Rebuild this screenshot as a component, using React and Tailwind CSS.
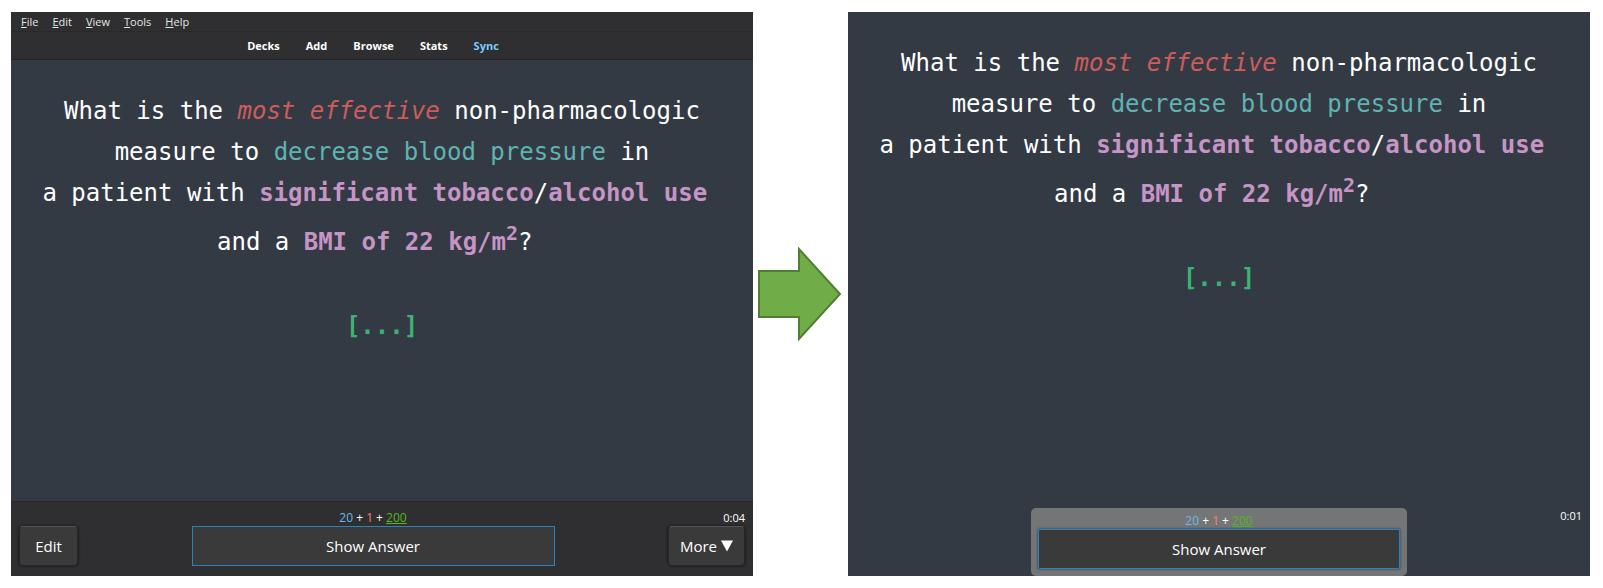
const menus = ['File', 'Edit', 'View', 'Tools', 'Help'];
const links = ['Decks', 'Add', 'Browse', 'Stats', 'Sync'];

function Question() {
  return (
    <div className="text-center font-['DejaVu_Sans_Mono',monospace] text-[24px] leading-[41px] whitespace-nowrap text-white">
      <p>
        What is the <em className="text-[#cd5c5c]">most effective</em> non-pharmacologic
      </p>
      <p>
        measure to <span className="text-[#5fb3b3]">decrease blood pressure</span> in
      </p>
      <p>
        a patient with <b className="text-[#c695c6]">significant tobacco</b>/
        <b className="text-[#c695c6]">alcohol use</b>&nbsp;
      </p>
      <p className="pt-2">
        and a{' '}
        <b className="text-[#c695c6]">
          BMI of 22 kg/m<sup className="text-[20px]">2</sup>
        </b>
        ?&nbsp;
      </p>
      <p className="pt-[43px] font-bold text-[#3cb371]">[...]</p>
    </div>
  );
}

function Counts() {
  return (
    <div className="text-center text-[12px] leading-4 text-white">
      <span className="text-[#6bb8ec]">20</span> + <span className="text-[#f5875f]">1</span> +{' '}
      <u className="text-[#56b81c]">200</u>
    </div>
  );
}

function AnswerButton({ className = '' }) {
  return (
    <button
      type="button"
      className={`h-10 w-full border border-[#2a82bd] bg-[#3a3a3a] text-[15px] text-white ${className}`}
    >
      Show Answer
    </button>
  );
}

function SideButton({ className, children }) {
  return (
    <button
      type="button"
      className={`flex h-10 items-center justify-center gap-1 rounded-[4px] border border-[#262626] border-t-[#555555] bg-[#3a3a3a] text-[15px] text-white shadow-[0_0_2px_1px_#202020] ${className}`}
    >
      {children}
    </button>
  );
}

function WindowedReviewer() {
  return (
    <section className="flex min-w-0 flex-1 flex-col bg-[#343a44]">
      <header className="bg-[#2f2f31]">
        <nav className="flex h-5 items-center gap-3.5 border-b border-[#292929] px-2.5 pt-0.5 text-[11px] text-[#e4e4e4]">
          {menus.map((m) => (
            <button type="button" key={m}>
              <u>{m[0]}</u>
              {m.slice(1)}
            </button>
          ))}
        </nav>
        <nav className="flex h-7 items-center justify-center gap-[26px] border-b border-[#232323] pt-0.5 pr-[18px] text-[11px] font-bold text-white">
          {links.map((l) => (
            <a href={'#' + l} key={l} className={l === 'Sync' ? 'text-[#77ccff]' : ''}>
              {l}
            </a>
          ))}
        </nav>
      </header>
      <main className="flex-1 pt-[31px]">
        <Question />
      </main>
      <footer className="flex items-end justify-between border-t border-[#29292b] bg-[#2f2f31] px-2 pt-2 pb-2.5">
        <SideButton className="w-[59px]">Edit</SideButton>
        <div className="w-[363px]">
          <Counts />
          <AnswerButton />
        </div>
        <div className="flex flex-col items-end">
          <span className="text-[11px] leading-4 text-white">0:04</span>
          <SideButton className="w-[77px]">
            More
            <svg viewBox="0 0 12 12" className="size-3 fill-white">
              <path d="M0 0.5H12L6 11.5Z" />
            </svg>
          </SideButton>
        </div>
      </footer>
    </section>
  );
}

function FullscreenReviewer() {
  return (
    <section className="flex min-w-0 flex-1 flex-col bg-[#343a44]">
      <main className="flex-1 pt-[31px]">
        <Question />
      </main>
      <footer className="grid grid-cols-[1fr_376px_1fr]">
        <div className="col-start-2 rounded-[5px] bg-[#737577] px-[7px] pt-[5px] pb-[7px]">
          <Counts />
          <AnswerButton className="rounded-[2px] shadow-[0_0_2px_1px_#4a5a66]" />
        </div>
        <span className="pr-2 text-right text-[11px] leading-4 text-white">0:01</span>
      </footer>
    </section>
  );
}

export default function App() {
  return (
    <div className="flex min-h-screen bg-white py-3 pr-[13px] pl-[11px] font-['Open_Sans','Noto_Sans',sans-serif]">
      <WindowedReviewer />
      <div className="flex w-[95px] items-center pl-1">
        <svg viewBox="0 0 85 96" className="w-[85px] fill-[#70ad47] stroke-[#507e32]" strokeWidth="2">
          <path d="M2 25H42V3L83 48L42 93V71H2Z" />
        </svg>
      </div>
      <FullscreenReviewer />
    </div>
  );
}
